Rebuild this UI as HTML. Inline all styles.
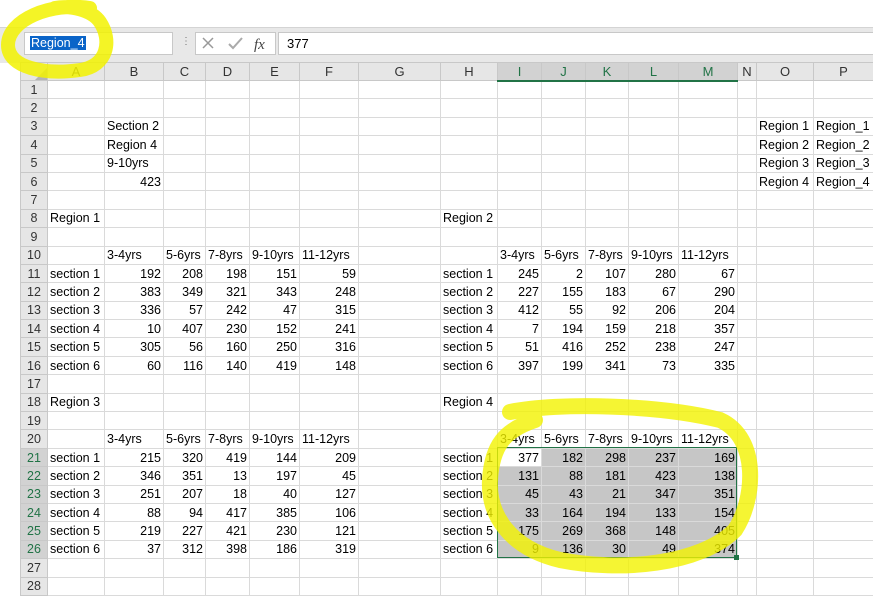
<!DOCTYPE html>
<html><head><meta charset="utf-8"><style>
body{margin:0;width:873px;height:595px;overflow:hidden;background:#fff;font-family:"Liberation Sans",Arial,sans-serif;position:relative}
.top{position:absolute;left:0;top:27px;width:873px;height:35px;background:#e8e8e8;border-top:1px solid #d4d4d4}
.nb{position:absolute;left:24px;top:32px;width:147px;height:21px;background:#fff;border:1px solid #c8c8c8}
.nb span{position:absolute;left:5px;top:3px;background:#0a64c8;color:#fff;font-size:12.5px;padding:0 1px}
.fx{position:absolute;left:195px;top:32px;width:79px;height:21px;background:#fff;border:1px solid #c8c8c8}
.fi{position:absolute;left:278px;top:32px;width:600px;height:21px;background:#fff;border:1px solid #c8c8c8;font-size:13px}
table{position:absolute;left:20px;top:62px;width:853px;border-collapse:collapse;table-layout:fixed;font-size:12.5px}
td{border:1px solid #dadada;height:18.4px;padding:0 2px;white-space:nowrap;overflow:hidden;box-sizing:border-box}
tr.h td{background:#e6e6e6;text-align:center;font-size:13px;color:#333;height:18px;border-color:#c8c8c8}
td.rh{background:#e6e6e6;text-align:center;color:#333;font-size:12.5px;border-color:#c8c8c8;padding:0}
td.n{text-align:right}
td.s{background:#c6c6c6}
tr.h td.sh{background:#d2d2d2;color:#217346;border-bottom:2px solid #217346}
td.rh.sh{background:#d2d2d2;color:#217346}
</style></head><body>
<div class="top"></div>
<div class="nb"><span>Region_4</span></div>
<div style="position:absolute;left:181px;top:36px;color:#777;font-size:10px">⋮</div>
<div class="fx"><svg width="79" height="21"><path d="M7 5L17 15M17 5L7 15" stroke="#999" stroke-width="1.5"/><path d="M33 11L37 15L46 5" stroke="#aaa" stroke-width="2" fill="none"/><text x="58" y="16" font-family="Liberation Serif" font-style="italic" font-size="15" fill="#444">fx</text></svg></div>
<div class="fi"><span style="position:absolute;left:8px;top:3px">377</span></div>
<table>
<colgroup><col style="width:27px"><col style="width:57px"><col style="width:59px"><col style="width:42px"><col style="width:44px"><col style="width:50px"><col style="width:59px"><col style="width:82px"><col style="width:57px"><col style="width:44px"><col style="width:44px"><col style="width:43px"><col style="width:50px"><col style="width:59px"><col style="width:19px"><col style="width:57px"><col style="width:60px"></colgroup>
<tr class="h"><td style="background:#e6e6e6"><svg width="14" height="12" style="display:block;margin:4px 0 0 10px"><path d="M14 0L14 12L2 12Z" fill="#b4b4b4"/></svg></td><td>A</td><td>B</td><td>C</td><td>D</td><td>E</td><td>F</td><td>G</td><td>H</td><td class="sh">I</td><td class="sh">J</td><td class="sh">K</td><td class="sh">L</td><td class="sh">M</td><td>N</td><td>O</td><td>P</td></tr>
<tr><td class="rh">1</td><td></td><td></td><td></td><td></td><td></td><td></td><td></td><td></td><td></td><td></td><td></td><td></td><td></td><td></td><td></td><td></td></tr>
<tr><td class="rh">2</td><td></td><td></td><td></td><td></td><td></td><td></td><td></td><td></td><td></td><td></td><td></td><td></td><td></td><td></td><td></td><td></td></tr>
<tr><td class="rh">3</td><td></td><td>Section 2</td><td></td><td></td><td></td><td></td><td></td><td></td><td></td><td></td><td></td><td></td><td></td><td></td><td>Region 1</td><td>Region_1</td></tr>
<tr><td class="rh">4</td><td></td><td>Region 4</td><td></td><td></td><td></td><td></td><td></td><td></td><td></td><td></td><td></td><td></td><td></td><td></td><td>Region 2</td><td>Region_2</td></tr>
<tr><td class="rh">5</td><td></td><td>9-10yrs</td><td></td><td></td><td></td><td></td><td></td><td></td><td></td><td></td><td></td><td></td><td></td><td></td><td>Region 3</td><td>Region_3</td></tr>
<tr><td class="rh">6</td><td></td><td class="n">423</td><td></td><td></td><td></td><td></td><td></td><td></td><td></td><td></td><td></td><td></td><td></td><td></td><td>Region 4</td><td>Region_4</td></tr>
<tr><td class="rh">7</td><td></td><td></td><td></td><td></td><td></td><td></td><td></td><td></td><td></td><td></td><td></td><td></td><td></td><td></td><td></td><td></td></tr>
<tr><td class="rh">8</td><td>Region 1</td><td></td><td></td><td></td><td></td><td></td><td></td><td>Region 2</td><td></td><td></td><td></td><td></td><td></td><td></td><td></td><td></td></tr>
<tr><td class="rh">9</td><td></td><td></td><td></td><td></td><td></td><td></td><td></td><td></td><td></td><td></td><td></td><td></td><td></td><td></td><td></td><td></td></tr>
<tr><td class="rh">10</td><td></td><td>3-4yrs</td><td>5-6yrs</td><td>7-8yrs</td><td>9-10yrs</td><td>11-12yrs</td><td></td><td></td><td>3-4yrs</td><td>5-6yrs</td><td>7-8yrs</td><td>9-10yrs</td><td>11-12yrs</td><td></td><td></td><td></td></tr>
<tr><td class="rh">11</td><td>section 1</td><td class="n">192</td><td class="n">208</td><td class="n">198</td><td class="n">151</td><td class="n">59</td><td></td><td>section 1</td><td class="n">245</td><td class="n">2</td><td class="n">107</td><td class="n">280</td><td class="n">67</td><td></td><td></td><td></td></tr>
<tr><td class="rh">12</td><td>section 2</td><td class="n">383</td><td class="n">349</td><td class="n">321</td><td class="n">343</td><td class="n">248</td><td></td><td>section 2</td><td class="n">227</td><td class="n">155</td><td class="n">183</td><td class="n">67</td><td class="n">290</td><td></td><td></td><td></td></tr>
<tr><td class="rh">13</td><td>section 3</td><td class="n">336</td><td class="n">57</td><td class="n">242</td><td class="n">47</td><td class="n">315</td><td></td><td>section 3</td><td class="n">412</td><td class="n">55</td><td class="n">92</td><td class="n">206</td><td class="n">204</td><td></td><td></td><td></td></tr>
<tr><td class="rh">14</td><td>section 4</td><td class="n">10</td><td class="n">407</td><td class="n">230</td><td class="n">152</td><td class="n">241</td><td></td><td>section 4</td><td class="n">7</td><td class="n">194</td><td class="n">159</td><td class="n">218</td><td class="n">357</td><td></td><td></td><td></td></tr>
<tr><td class="rh">15</td><td>section 5</td><td class="n">305</td><td class="n">56</td><td class="n">160</td><td class="n">250</td><td class="n">316</td><td></td><td>section 5</td><td class="n">51</td><td class="n">416</td><td class="n">252</td><td class="n">238</td><td class="n">247</td><td></td><td></td><td></td></tr>
<tr><td class="rh">16</td><td>section 6</td><td class="n">60</td><td class="n">116</td><td class="n">140</td><td class="n">419</td><td class="n">148</td><td></td><td>section 6</td><td class="n">397</td><td class="n">199</td><td class="n">341</td><td class="n">73</td><td class="n">335</td><td></td><td></td><td></td></tr>
<tr><td class="rh">17</td><td></td><td></td><td></td><td></td><td></td><td></td><td></td><td></td><td></td><td></td><td></td><td></td><td></td><td></td><td></td><td></td></tr>
<tr><td class="rh">18</td><td>Region 3</td><td></td><td></td><td></td><td></td><td></td><td></td><td>Region 4</td><td></td><td></td><td></td><td></td><td></td><td></td><td></td><td></td></tr>
<tr><td class="rh">19</td><td></td><td></td><td></td><td></td><td></td><td></td><td></td><td></td><td></td><td></td><td></td><td></td><td></td><td></td><td></td><td></td></tr>
<tr><td class="rh">20</td><td></td><td>3-4yrs</td><td>5-6yrs</td><td>7-8yrs</td><td>9-10yrs</td><td>11-12yrs</td><td></td><td></td><td>3-4yrs</td><td>5-6yrs</td><td>7-8yrs</td><td>9-10yrs</td><td>11-12yrs</td><td></td><td></td><td></td></tr>
<tr><td class="rh sh">21</td><td>section 1</td><td class="n">215</td><td class="n">320</td><td class="n">419</td><td class="n">144</td><td class="n">209</td><td></td><td>section 1</td><td class="n">377</td><td class="n s">182</td><td class="n s">298</td><td class="n s">237</td><td class="n s">169</td><td></td><td></td><td></td></tr>
<tr><td class="rh sh">22</td><td>section 2</td><td class="n">346</td><td class="n">351</td><td class="n">13</td><td class="n">197</td><td class="n">45</td><td></td><td>section 2</td><td class="n s">131</td><td class="n s">88</td><td class="n s">181</td><td class="n s">423</td><td class="n s">138</td><td></td><td></td><td></td></tr>
<tr><td class="rh sh">23</td><td>section 3</td><td class="n">251</td><td class="n">207</td><td class="n">18</td><td class="n">40</td><td class="n">127</td><td></td><td>section 3</td><td class="n s">45</td><td class="n s">43</td><td class="n s">21</td><td class="n s">347</td><td class="n s">351</td><td></td><td></td><td></td></tr>
<tr><td class="rh sh">24</td><td>section 4</td><td class="n">88</td><td class="n">94</td><td class="n">417</td><td class="n">385</td><td class="n">106</td><td></td><td>section 4</td><td class="n s">33</td><td class="n s">164</td><td class="n s">194</td><td class="n s">133</td><td class="n s">154</td><td></td><td></td><td></td></tr>
<tr><td class="rh sh">25</td><td>section 5</td><td class="n">219</td><td class="n">227</td><td class="n">421</td><td class="n">230</td><td class="n">121</td><td></td><td>section 5</td><td class="n s">175</td><td class="n s">269</td><td class="n s">368</td><td class="n s">148</td><td class="n s">405</td><td></td><td></td><td></td></tr>
<tr><td class="rh sh">26</td><td>section 6</td><td class="n">37</td><td class="n">312</td><td class="n">398</td><td class="n">186</td><td class="n">319</td><td></td><td>section 6</td><td class="n s">9</td><td class="n s">136</td><td class="n s">30</td><td class="n s">49</td><td class="n s">374</td><td></td><td></td><td></td></tr>
<tr><td class="rh">27</td><td></td><td></td><td></td><td></td><td></td><td></td><td></td><td></td><td></td><td></td><td></td><td></td><td></td><td></td><td></td><td></td></tr>
<tr><td class="rh">28</td><td></td><td></td><td></td><td></td><td></td><td></td><td></td><td></td><td></td><td></td><td></td><td></td><td></td><td></td><td></td><td></td></tr>
</table>
<div style="position:absolute;left:497px;top:447px;width:240px;height:111px;border:1.5px solid #217346;box-sizing:border-box"></div>
<div style="position:absolute;left:734px;top:555px;width:5px;height:5px;background:#217346"></div>
<svg width="873" height="595" style="position:absolute;left:0;top:0;pointer-events:none">
<path d="M90 8C50 2 8 20 8 45C8 68 45 75 80 70C108 66 112 40 100 22C92 10 70 5 55 8" fill="none" stroke="#f2f200" stroke-width="14" stroke-linecap="round" opacity="0.85"/>
<path d="M510 412C560 402 660 405 720 420C760 438 755 500 735 530C700 565 620 572 560 560C510 548 488 515 490 480C492 445 505 430 535 420" fill="none" stroke="#f2f200" stroke-width="16" stroke-linecap="round" opacity="0.8"/>
</svg>
</body></html>
